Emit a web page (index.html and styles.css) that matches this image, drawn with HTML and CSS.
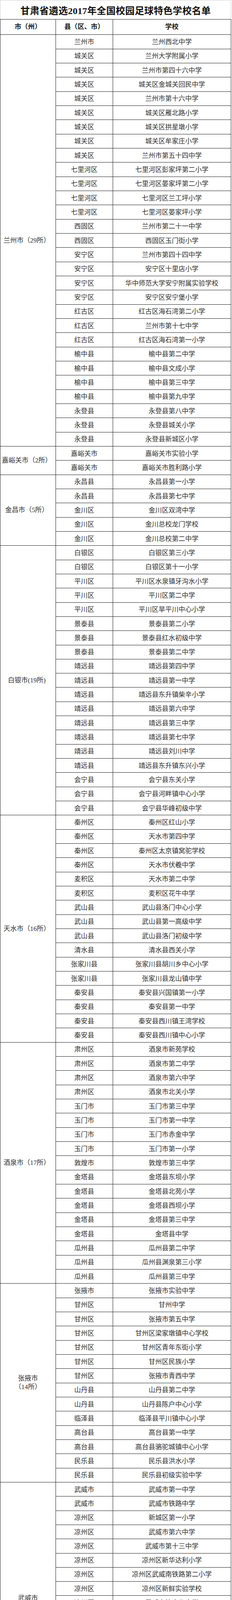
FILE: index.html
```html
<!DOCTYPE html>
<html lang="zh-CN">
<head>
<meta charset="utf-8">
<title>甘肃省遴选2017年全国校园足球特色学校名单</title>
<link rel="stylesheet" href="styles.css">
</head>
<body>
<div class="page">
  <div class="title">甘肃省遴选2017年全国校园足球特色学校名单</div>
  <div class="grid">
    <div class="cell head">市（州）</div><div class="cell head">县（区、市）</div><div class="cell head">学校</div>

    <div class="cell city" style="grid-row: span 29">兰州市（29所）</div>
    <div class="cell">兰州市</div><div class="cell">兰州西北中学</div>
    <div class="cell">城关区</div><div class="cell">兰州大学附属小学</div>
    <div class="cell">城关区</div><div class="cell">兰州市第四十六中学</div>
    <div class="cell">城关区</div><div class="cell">城关区金城关回民中学</div>
    <div class="cell">城关区</div><div class="cell">兰州市第十六中学</div>
    <div class="cell">城关区</div><div class="cell">城关区雁北路小学</div>
    <div class="cell">城关区</div><div class="cell">城关区拱星墩小学</div>
    <div class="cell">城关区</div><div class="cell">城关区牟家庄小学</div>
    <div class="cell">城关区</div><div class="cell">兰州市第五十四中学</div>
    <div class="cell">七里河区</div><div class="cell">七里河区彭家坪第二小学</div>
    <div class="cell">七里河区</div><div class="cell">七里河区晏家坪第二小学</div>
    <div class="cell">七里河区</div><div class="cell">七里河区兰工坪小学</div>
    <div class="cell">七里河区</div><div class="cell">七里河区晏家坪小学</div>
    <div class="cell">西固区</div><div class="cell">兰州市第二十一中学</div>
    <div class="cell">西固区</div><div class="cell">西固区玉门街小学</div>
    <div class="cell">安宁区</div><div class="cell">兰州市第四十四中学</div>
    <div class="cell">安宁区</div><div class="cell">安宁区十里店小学</div>
    <div class="cell">安宁区</div><div class="cell">华中师范大学安宁附属实验学校</div>
    <div class="cell">安宁区</div><div class="cell">安宁区安宁堡小学</div>
    <div class="cell">红古区</div><div class="cell">红古区海石湾第二小学</div>
    <div class="cell">红古区</div><div class="cell">兰州市第十七中学</div>
    <div class="cell">红古区</div><div class="cell">红古区海石湾第一小学</div>
    <div class="cell">榆中县</div><div class="cell">榆中县第二中学</div>
    <div class="cell">榆中县</div><div class="cell">榆中县文成小学</div>
    <div class="cell">榆中县</div><div class="cell">榆中县第三中学</div>
    <div class="cell">榆中县</div><div class="cell">榆中县第九中学</div>
    <div class="cell">永登县</div><div class="cell">永登县第八中学</div>
    <div class="cell">永登县</div><div class="cell">永登县城关小学</div>
    <div class="cell">永登县</div><div class="cell">永登县新城区小学</div>

    <div class="cell city" style="grid-row: span 2">嘉峪关市（2所）</div>
    <div class="cell">嘉峪关市</div><div class="cell">嘉峪关市实验小学</div>
    <div class="cell">嘉峪关市</div><div class="cell">嘉峪关市胜利路小学</div>

    <div class="cell city" style="grid-row: span 5">金昌市（5所）</div>
    <div class="cell">永昌县</div><div class="cell">永昌县第一小学</div>
    <div class="cell">永昌县</div><div class="cell">永昌县第七中学</div>
    <div class="cell">金川区</div><div class="cell">金川区双湾中学</div>
    <div class="cell">金川区</div><div class="cell">金川总校龙门学校</div>
    <div class="cell">金川区</div><div class="cell">金川总校第二中学</div>

    <div class="cell city" style="grid-row: span 19">白银市(19所)</div>
    <div class="cell">白银区</div><div class="cell">白银区第三小学</div>
    <div class="cell">白银区</div><div class="cell">白银区第十一小学</div>
    <div class="cell">平川区</div><div class="cell">平川区水泉镇牙沟水小学</div>
    <div class="cell">平川区</div><div class="cell">平川区第二中学</div>
    <div class="cell">平川区</div><div class="cell">平川区旱平川中心小学</div>
    <div class="cell">景泰县</div><div class="cell">景泰县第二小学</div>
    <div class="cell">景泰县</div><div class="cell">景泰县红水初级中学</div>
    <div class="cell">景泰县</div><div class="cell">景泰县第二中学</div>
    <div class="cell">靖远县</div><div class="cell">靖远县第四中学</div>
    <div class="cell">靖远县</div><div class="cell">靖远县第一中学</div>
    <div class="cell">靖远县</div><div class="cell">靖远县东升镇柴辛小学</div>
    <div class="cell">靖远县</div><div class="cell">靖远县第六中学</div>
    <div class="cell">靖远县</div><div class="cell">靖远县第三中学</div>
    <div class="cell">靖远县</div><div class="cell">靖远县第七中学</div>
    <div class="cell">靖远县</div><div class="cell">靖远县刘川中学</div>
    <div class="cell">靖远县</div><div class="cell">靖远县东升镇东兴小学</div>
    <div class="cell">会宁县</div><div class="cell">会宁县东关小学</div>
    <div class="cell">会宁县</div><div class="cell">会宁县河畔镇中心小学</div>
    <div class="cell">会宁县</div><div class="cell">会宁县华峰初级中学</div>

    <div class="cell city" style="grid-row: span 16">天水市（16所）</div>
    <div class="cell">秦州区</div><div class="cell">秦州区红山小学</div>
    <div class="cell">秦州区</div><div class="cell">天水市第四中学</div>
    <div class="cell">秦州区</div><div class="cell">秦州区太京镇窝驼学校</div>
    <div class="cell">秦州区</div><div class="cell">天水市伏羲中学</div>
    <div class="cell">麦积区</div><div class="cell">天水市第二中学</div>
    <div class="cell">麦积区</div><div class="cell">麦积区花牛中学</div>
    <div class="cell">武山县</div><div class="cell">武山县洛门中心小学</div>
    <div class="cell">武山县</div><div class="cell">武山县第一高级中学</div>
    <div class="cell">武山县</div><div class="cell">武山县洛门初级中学</div>
    <div class="cell">清水县</div><div class="cell">清水县西关小学</div>
    <div class="cell">张家川县</div><div class="cell">张家川县胡川乡中心小学</div>
    <div class="cell">张家川县</div><div class="cell">张家川县龙山镇中学</div>
    <div class="cell">秦安县</div><div class="cell">秦安县兴国镇第一小学</div>
    <div class="cell">秦安县</div><div class="cell">秦安县第一中学</div>
    <div class="cell">秦安县</div><div class="cell">秦安县西川镇王湾学校</div>
    <div class="cell">秦安县</div><div class="cell">秦安县西川镇中心小学</div>

    <div class="cell city" style="grid-row: span 17">酒泉市（17所）</div>
    <div class="cell">肃州区</div><div class="cell">酒泉市新苑学校</div>
    <div class="cell">肃州区</div><div class="cell">酒泉市第二中学</div>
    <div class="cell">肃州区</div><div class="cell">酒泉市第六中学</div>
    <div class="cell">肃州区</div><div class="cell">酒泉市北关小学</div>
    <div class="cell">玉门市</div><div class="cell">玉门市第三中学</div>
    <div class="cell">玉门市</div><div class="cell">玉门市第一中学</div>
    <div class="cell">玉门市</div><div class="cell">玉门市赤金中学</div>
    <div class="cell">玉门市</div><div class="cell">玉门市第一小学</div>
    <div class="cell">敦煌市</div><div class="cell">敦煌市第三中学</div>
    <div class="cell">金塔县</div><div class="cell">金塔县东坝小学</div>
    <div class="cell">金塔县</div><div class="cell">金塔县北苑小学</div>
    <div class="cell">金塔县</div><div class="cell">金塔县西坝小学</div>
    <div class="cell">金塔县</div><div class="cell">金塔县第三中学</div>
    <div class="cell">金塔县</div><div class="cell">金塔县中学</div>
    <div class="cell">瓜州县</div><div class="cell">瓜州县第二中学</div>
    <div class="cell">瓜州县</div><div class="cell">瓜州县渊泉第三小学</div>
    <div class="cell">瓜州县</div><div class="cell">瓜州县第三中学</div>

    <div class="cell city two" style="grid-row: span 14"><span class="lbl">张掖市<br>（14所）</span></div>
    <div class="cell">张掖市</div><div class="cell">张掖市实验中学</div>
    <div class="cell">甘州区</div><div class="cell">甘州中学</div>
    <div class="cell">甘州区</div><div class="cell">张掖市第五中学</div>
    <div class="cell">甘州区</div><div class="cell">甘州区梁家墩镇中心学校</div>
    <div class="cell">甘州区</div><div class="cell">甘州区青年东街小学</div>
    <div class="cell">甘州区</div><div class="cell">甘州区民族小学</div>
    <div class="cell">甘州区</div><div class="cell">张掖市青西中学</div>
    <div class="cell">山丹县</div><div class="cell">山丹县第二中学</div>
    <div class="cell">山丹县</div><div class="cell">山丹县陈户中心小学</div>
    <div class="cell">临泽县</div><div class="cell">临泽县平川镇中心小学</div>
    <div class="cell">高台县</div><div class="cell">高台县第一中学</div>
    <div class="cell">高台县</div><div class="cell">高台县骆驼城镇中心小学</div>
    <div class="cell">民乐县</div><div class="cell">民乐县洪水小学</div>
    <div class="cell">民乐县</div><div class="cell">民乐县初级实验中学</div>

    <div class="cell city two" style="grid-row: span 17"><span class="lbl">武威市<br>（17所）</span></div>
    <div class="cell">武威市</div><div class="cell">武威市第一中学</div>
    <div class="cell">武威市</div><div class="cell">武威市铁路中学</div>
    <div class="cell">凉州区</div><div class="cell">新城区第一小学</div>
    <div class="cell">凉州区</div><div class="cell">武威市第六中学</div>
    <div class="cell">凉州区</div><div class="cell">武威市第十三中学</div>
    <div class="cell">凉州区</div><div class="cell">凉州区新华达利小学</div>
    <div class="cell">凉州区</div><div class="cell">凉州区武威南铁路第二小学</div>
    <div class="cell">凉州区</div><div class="cell">凉州区新鲜实验学校</div>
    <div class="cell">凉州区</div><div class="cell">武威市第十九中学</div>
    <div class="cell">民勤县</div><div class="cell">民勤县薛百乡五星完全小学</div>
    <div class="cell">民勤县</div><div class="cell">民勤县新民小学</div>
    <div class="cell">民勤县</div><div class="cell">民勤县东坝镇九年一贯制学校</div>
    <div class="cell">天祝县</div><div class="cell">天祝藏族自治县华藏寺镇岔口驿小学</div>
    <div class="cell">天祝县</div><div class="cell">天祝藏族自治县第二中学</div>
    <div class="cell">天祝县</div><div class="cell up">天祝藏族自治县第一中学</div>
    <div class="cell">古浪县</div><div class="cell">古浪县第六中学</div>
    <div class="cell">古浪县</div><div class="cell">古浪县第一中学</div>

    <div class="cell city" style="grid-row: span 10">定西市（10所）</div>
    <div class="cell">安定区</div><div class="cell">安定区西关小学</div>
    <div class="cell">安定区</div><div class="cell">安定区思源实验学校</div>
    <div class="cell">安定区</div><div class="cell">定西理工中等专业学校</div>
    <div class="cell">临洮县</div><div class="cell">临洮县第二中学</div>
    <div class="cell">临洮县</div><div class="cell">临洮中学</div>
    <div class="cell">通渭县</div><div class="cell">通渭县第一中学</div>
    <div class="cell">陇西县</div><div class="cell">陇西县思源实验学校</div>
    <div class="cell">渭源县</div><div class="cell">渭源县第三高级中学</div>
    <div class="cell">渭源县</div><div class="cell">渭源县第四高级中学</div>
    <div class="cell">漳　县</div><div class="cell">漳县第二中学</div>

    <div class="cell city low" style="grid-row: span 14">陇南市（14所）</div>
    <div class="cell">武都区</div><div class="cell">武都区江南小学</div>
    <div class="cell">武都区</div><div class="cell">武都区马街小学</div>
    <div class="cell">武都区</div><div class="cell">武都区安化小学</div>
    <div class="cell">武都区</div><div class="cell">武都区佛崖初中</div>
    <div class="cell">武都区</div><div class="cell">武都区东江初中</div>
    <div class="cell">西和县</div><div class="cell">西和县北川初级中学</div>
    <div class="cell">礼县</div><div class="cell">礼县实验中学</div>
    <div class="cell">礼县</div><div class="cell">礼县盐官上海航天希望小学</div>
    <div class="cell">礼县</div><div class="cell">礼县红河镇中心小学</div>
    <div class="cell">徽县</div><div class="cell">徽县第四中学</div>
    <div class="cell">两当县</div><div class="cell">两当县第一中学</div>
    <div class="cell">成县</div><div class="cell">成县小川小学</div>
    <div class="cell">康县</div><div class="cell">康县阳坝镇中心小学</div>
    <div class="cell">康县</div><div class="cell">康县第二中学</div>

    <div class="cell city" style="grid-row: span 12">平凉市（12所）</div>
    <div class="cell">崆峒区</div><div class="cell">崆峒区解放路小学</div>
    <div class="cell">崆峒区</div><div class="cell">柳湖镇赵堡初级中学</div>
    <div class="cell">崆峒区</div><div class="cell">平凉市第一中学</div>
    <div class="cell">崆峒区</div><div class="cell">崆峒区广成学校</div>
    <div class="cell">庄浪县</div><div class="cell">庄浪县第三小学</div>
    <div class="cell">庄浪县</div><div class="cell">庄浪县第四中学</div>
    <div class="cell">静宁县</div><div class="cell">静宁县第三中学</div>
    <div class="cell">静宁县</div><div class="cell">静宁县文萃中学</div>
    <div class="cell">泾川县</div><div class="cell">泾川县第三小学</div>
    <div class="cell">泾川县</div><div class="cell">泾川县玉都中学</div>
    <div class="cell">灵台县</div><div class="cell">灵台县什字中心小学</div>
    <div class="cell">灵台县</div><div class="cell">灵台县第一中学</div>

    <div class="cell city" style="grid-row: span 9">庆阳市(9所)</div>
    <div class="cell">庆阳市</div><div class="cell">庆阳长庆中学</div>
    <div class="cell">西峰区</div><div class="cell">西峰区新建小学</div>
    <div class="cell">镇原县</div><div class="cell">城关初级中学</div>
    <div class="cell">庆城县</div><div class="cell">驿马初级中学</div>
    <div class="cell">宁县</div><div class="cell">宁县第一中学</div>
    <div class="cell">宁县</div><div class="cell">宁县宁江小学</div>
    <div class="cell">环县</div><div class="cell">环县第二中学</div>
    <div class="cell">环县</div><div class="cell">环县第三中学</div>
    <div class="cell">环县</div><div class="cell">环县甜水初级中学</div>

    <div class="cell city" style="grid-row: span 11">临夏州（11所）</div>
    <div class="cell">和政县</div><div class="cell">和政县第一中学</div>
    <div class="cell">广河县</div><div class="cell">广河县三甲集中学</div>
    <div class="cell">广河县</div><div class="cell">广河县白庄头小学</div>
    <div class="cell">临夏市</div><div class="cell">临夏市第三中学</div>
    <div class="cell">临夏市</div><div class="cell">临夏州职业学校</div>
    <div class="cell">东乡县</div><div class="cell">东乡县第三中学</div>
    <div class="cell">康乐县</div><div class="cell">康乐县高集小学</div>
    <div class="cell">永靖县</div><div class="cell">永靖县大川小学</div>
    <div class="cell">永靖县</div><div class="cell">永靖中学</div>
    <div class="cell">积石山县</div><div class="cell">积石山县吹麻滩镇前庄小学</div>
    <div class="cell">临夏县</div><div class="cell">临夏县新集中学</div>

    <div class="cell city" style="grid-row: span 3">甘南州（3所）</div>
    <div class="cell">合作市</div><div class="cell">合作市第二小学</div>
    <div class="cell">临潭县</div><div class="cell">临潭县第一中学</div>
    <div class="cell">卓尼县</div><div class="cell">卓尼县柳林小学</div>

    <div class="cell city" style="grid-row: span 2">兰州新区（2所）</div>
    <div class="cell">兰州新区</div><div class="cell">永登县秦川镇周杰希望小学</div>
    <div class="cell">兰州新区</div><div class="cell">皋兰县西岔中学</div>
  </div>
  <div class="foot">
    <div class="cell blank faint"></div><div class="cell blank"></div><div class="cell blank"></div>
    <div class="cell pilot">全国校园足球试点县（区）</div><div class="cell">白银市靖远县</div>
  </div>
</div>
</body>
</html>
```

FILE: styles.css
```css
html, body {
  margin: 0;
  padding: 0;
  background: #ffffff;
}

body {
  font-family: "Liberation Serif", "Noto Sans CJK SC", serif;
  color: #2e2e2e;
}

.page {
  width: 591px;
}

.title {
  box-sizing: border-box;
  height: 49px;
  border: 1px solid #cfcfcf;
  border-bottom: 0;
  display: flex;
  align-items: center;
  justify-content: center;
  font-size: 24px;
  font-weight: 700;
  color: #111111;
  letter-spacing: 0.3px;
}

.grid {
  display: grid;
  grid-template-columns: 142px 145.5px 302.5px;
  grid-template-rows: 39.4px;
  grid-auto-rows: 36.34px;
  border-top: 1px solid #1e1e1e;
  border-left: 1px solid #1e1e1e;
}

.cell {
  box-sizing: border-box;
  border-right: 1px solid #1e1e1e;
  border-bottom: 1px solid #1e1e1e;
  display: flex;
  align-items: center;
  justify-content: center;
  text-align: center;
  font-size: 17px;
  line-height: 22px;
  padding-top: 2px;
  white-space: nowrap;
  min-width: 0;
  overflow: hidden;
}

.head {
  font-weight: 700;
  color: #1a1a1a;
  padding-top: 0;
}

.city {
  padding-right: 6px;
  padding-top: 0;
}

.city.two {
  padding-right: 0;
}

.lbl {
  display: block;
  line-height: 22px;
}

.city.low {
  padding-top: 26px;
}

.up {
  padding-top: 0;
  padding-bottom: 10px;
}

.foot {
  display: grid;
  grid-template-columns: 142px 145.5px 302.5px;
  grid-template-rows: 16px 85.4px;
  border-left: 1px solid #1e1e1e;
}

.blank.faint {
  border-right-color: #c4c4c4;
}

.pilot {
  grid-column: span 2;
  padding-right: 6px;
}
```
